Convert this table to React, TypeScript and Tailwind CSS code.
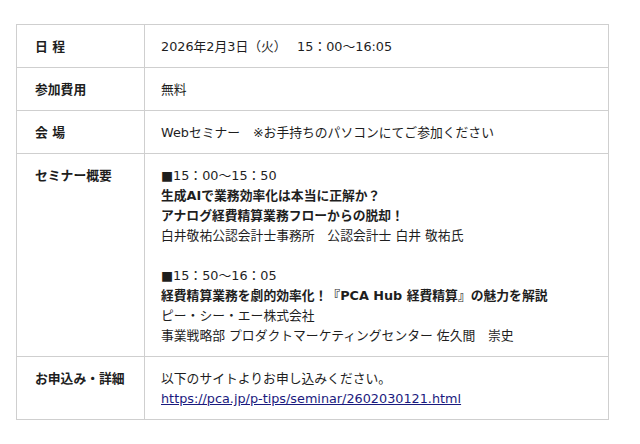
const rows: { label: string; lines: { text: string; bold?: boolean; link?: boolean }[] }[] = [
  { label: "日 程", lines: [{ text: "2026年2月3日（火）　 15：00～16:05" }] },
  { label: "参加費用", lines: [{ text: "無料" }] },
  { label: "会 場", lines: [{ text: "Webセミナー　※お手持ちのパソコンにてご参加ください" }] },
  {
    label: "セミナー概要",
    lines: [
      { text: "■15：00～15：50" },
      { text: "生成AIで業務効率化は本当に正解か？", bold: true },
      { text: "アナログ経費精算業務フローからの脱却！", bold: true },
      { text: "白井敬祐公認会計士事務所　公認会計士 白井 敬祐氏" },
      { text: "\u00a0" },
      { text: "■15：50～16：05" },
      { text: "経費精算業務を劇的効率化！『PCA Hub 経費精算』の魅力を解説", bold: true },
      { text: "ピー・シー・エー株式会社" },
      { text: "事業戦略部 プロダクトマーケティングセンター 佐久間　崇史" },
    ],
  },
  {
    label: "お申込み・詳細",
    lines: [
      { text: "以下のサイトよりお申し込みください。" },
      { text: "https://pca.jp/p-tips/seminar/2602030121.html", link: true },
    ],
  },
];

export default function App() {
  return (
    <div
      className="min-h-screen bg-white pt-6 pl-4 text-[12.8px] leading-5 text-[#1e1e1e]"
      style={{ fontFamily: '"DejaVu Sans", "Noto Sans CJK JP", sans-serif' }}
    >
      <table className="w-[593px] border-collapse border border-[#e3e3e3]">
        <tbody>
          {rows.map((row) => (
            <tr key={row.label}>
              <th className="w-[128px] border border-[#cfcfcf] pl-[18px] pr-2 pt-[12px] pb-[10px] text-left align-top font-bold">
                {row.label}
              </th>
              <td className="border border-[#cfcfcf] pl-4 pr-2 pt-[12px] pb-[10px] align-top">
                {row.lines.map((l, i) =>
                  l.link ? (
                    <div key={i}>
                      <a href="#" className="text-[#1a1a7e] underline">
                        {l.text}
                      </a>
                    </div>
                  ) : (
                    <div key={i} className={l.bold ? "font-bold" : ""}>
                      {l.text}
                    </div>
                  )
                )}
              </td>
            </tr>
          ))}
        </tbody>
      </table>
    </div>
  );
}
